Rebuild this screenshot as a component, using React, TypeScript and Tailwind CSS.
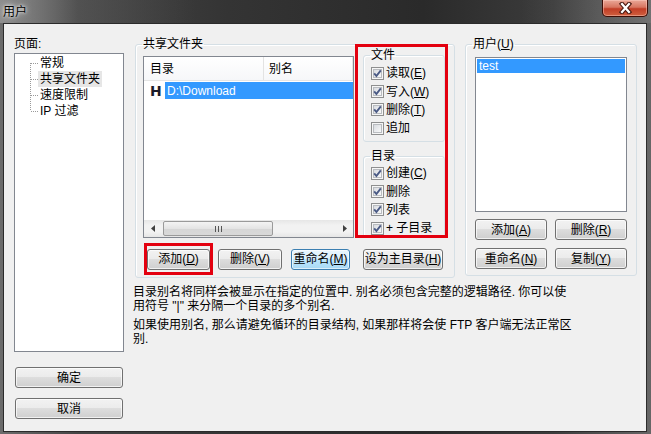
import type { ReactNode } from "react";

const btnBase =
  "h-[21px] flex items-center justify-center rounded-[3px] border text-[12px] leading-none text-black";
const btnNormal =
  "border-[#707070] bg-[linear-gradient(#f2f2f2_0%,#ebebeb_49%,#dddddd_50%,#cfcfcf_100%)] shadow-[inset_0_0_0_1px_rgba(255,255,255,0.7)]";
const btnFocus =
  "border-[#3c7fb1] bg-[linear-gradient(#eaf6fd_0%,#d9f0fc_49%,#bee6fd_50%,#a7d9f5_100%)] shadow-[inset_0_0_0_1px_rgba(255,255,255,0.6)]";

const groupBox = "border border-[#d5dfe5] rounded-[3px] shadow-[inset_1px_1px_0_#fff]";

const Btn = ({ children, className, focused }: { children: ReactNode; className: string; focused?: boolean }) => (
  <div className={`${btnBase} ${focused ? btnFocus : btnNormal} ${className}`}>{children}</div>
);

// accelerator key, e.g. (E) with underline
const K = ({ c }: { c: string }) => (
  <>
    (<span className="underline underline-offset-1">{c}</span>)
  </>
);

const Check = ({ on }: { on: boolean }) => (
  <svg width="13" height="13" viewBox="0 0 13 13" className="shrink-0">
    <defs>
      <linearGradient id="cbg" x1="0" y1="0" x2="1" y2="1">
        <stop offset="0" stopColor="#d6d9de" />
        <stop offset="1" stopColor="#fbfbfb" />
      </linearGradient>
    </defs>
    <rect x="0.5" y="0.5" width="12" height="12" fill="#f6f6f6" stroke="#8e8f8f" />
    <rect x="2.5" y="2.5" width="8" height="8" fill="url(#cbg)" stroke="#b9bcc0" />
    {on && <path d="M3.2 6.4 L5.4 9 L9.8 3.4" fill="none" stroke="#4a5a85" strokeWidth="1.9" />}
  </svg>
);

const Row = ({ on, children }: { on: boolean; children: ReactNode }) => (
  <div className="flex items-center h-[18.4px] gap-[2px]">
    <Check on={on} />
    <span>{children}</span>
  </div>
);

// dotted tree connector; pos: first | mid | last
const TreeLine = ({ pos }: { pos: "first" | "mid" | "last" }) => (
  <svg width="8" height="16" viewBox="0 0 8 16" className="shrink-0" shapeRendering="crispEdges">
    <line
      x1="0.5"
      y1={pos === "first" ? 8 : 0}
      x2="0.5"
      y2={pos === "last" ? 8 : 16}
      stroke="#9a9a9a"
      strokeDasharray="1 1"
    />
    <line x1="1" y1="8.5" x2="8" y2="8.5" stroke="#9a9a9a" strokeDasharray="1 1" />
  </svg>
);

const treeItems: { label: string; pos: "first" | "mid" | "last"; sel?: boolean }[] = [
  { label: "常规", pos: "first" },
  { label: "共享文件夹", pos: "mid", sel: true },
  { label: "速度限制", pos: "mid" },
  { label: "IP 过滤", pos: "last" },
];

export default function App() {
  return (
    <div className="w-[651px] h-[434px] flex flex-col overflow-hidden bg-[linear-gradient(90deg,#6c6c6c_0%,#444_12%,#343434_35%,#2a2a2a_65%,#3c3c3c_85%,#666_100%)] font-['Liberation_Sans','Noto_Sans_CJK_SC',sans-serif] text-[12px] leading-[14px] text-black">
      {/* title bar */}
      <div className="h-[23px] shrink-0 flex justify-between items-start bg-[linear-gradient(90deg,rgba(170,170,170,0.55)_0%,rgba(120,120,120,0.25)_12%,transparent_30%,transparent_80%,rgba(140,140,140,0.3)_100%)]">
        <div className="pl-[3px] pt-[5px] [text-shadow:0_0_6px_#fff,0_0_3px_#fff]">用户</div>
        <div className="mr-[3px] w-[46px] h-[17px] rounded-b-[5px] border border-t-0 border-[#3d0d05] bg-[linear-gradient(#eaa898_0%,#d77560_45%,#c13d26_55%,#d0603f_100%)] shadow-[inset_0_0_0_1px_rgba(255,210,200,0.45)] flex items-center justify-center">
          <svg width="15" height="12" viewBox="0 0 15 12">
            <path d="M4 2 L11 10 M11 2 L4 10" stroke="#4a1a12" strokeWidth="4.4" strokeLinecap="square" />
            <path d="M4 2 L11 10 M11 2 L4 10" stroke="#ffffff" strokeWidth="2.2" strokeLinecap="square" />
          </svg>
        </div>
      </div>

      {/* client area */}
      <div className="flex-1 ml-[3px] mr-[4px] mb-[2px] border border-[#2b2b2b] bg-[#f0f0f0] flex">
        {/* left column */}
        <div className="w-[120px] shrink-0 pl-[10px] pt-[13px] flex flex-col">
          <div>页面:</div>
          <div className="mt-[2px] w-[110px] h-[299px] border border-[#828790] bg-white pt-[1px]">
            {treeItems.map((t) => (
              <div key={t.label} className="h-[16px] flex items-center pl-[15px]">
                <TreeLine pos={t.pos} />
                <span className={`px-[2px] h-[16px] flex items-center ${t.sel ? "bg-[#e6e6e6]" : ""}`}>
                  {t.label}
                </span>
              </div>
            ))}
          </div>
          <Btn className="mt-[15px] ml-[1px] w-[108px]">确定</Btn>
          <Btn className="mt-[10px] ml-[1px] w-[108px]">取消</Btn>
        </div>

        {/* right area */}
        <div className="ml-[9px] pt-[13px] flex flex-col">
          <div className="flex items-start">
            {/* shared folders */}
            <fieldset className={`${groupBox} ml-[2px] w-[320px]`}>
              <legend className="ml-[6px] px-[1px] leading-[14px]">共享文件夹</legend>
              <div className="flex flex-col pb-[2px]">
                <div className="flex items-start">
                  <div className="ml-[7px] mt-[5px] w-[211px] h-[182px] border border-[#828790] bg-white flex flex-col">
                    <div className="h-[24px] flex border-b border-[#e5e5e5] bg-[linear-gradient(#ffffff,#f6f7f9)]">
                      <div className="w-[120px] pl-[6px] flex items-center border-r border-[#e3e3e3]">目录</div>
                      <div className="flex-1 pl-[5px] flex items-center border-r border-[#e3e3e3]">别名</div>
                    </div>
                    <div className="h-[17px] mt-[1px] flex items-center">
                      <span className="ml-[6px] w-[15px] font-['DejaVu_Sans',sans-serif] font-bold text-[14px] text-[#1a1a2a]">
                        H
                      </span>
                      <div className="flex-1 h-[17px] bg-[#3399ff] text-white pl-[2px] flex items-center">
                        {"D:\\Download"}
                      </div>
                    </div>
                    <div className="flex-1" />
                    {/* horizontal scrollbar */}
                    <div className="h-[17px] flex items-center bg-[linear-gradient(#e6e6e6,#f2f2f2_30%,#f2f2f2_70%,#e6e6e6)]">
                      <div className="w-[17px] h-[17px] flex items-center justify-center">
                        <svg width="4" height="7" viewBox="0 0 4 7">
                          <path d="M4 0 L0 3.5 L4 7 Z" fill="#404040" />
                        </svg>
                      </div>
                      <div className="ml-[2px] w-[110px] h-[15px] rounded-[2px] border border-[#9a9a9a] bg-[linear-gradient(#f4f4f4,#e4e4e4_50%,#d6d6d6_51%,#d9d9d9)] flex items-center justify-center">
                        <svg width="7" height="6" viewBox="0 0 7 6" shapeRendering="crispEdges">
                          <path d="M0.5 0 V6 M3.5 0 V6 M6.5 0 V6" stroke="#555" />
                        </svg>
                      </div>
                      <div className="flex-1" />
                      <div className="w-[17px] h-[17px] flex items-center justify-center">
                        <svg width="4" height="7" viewBox="0 0 4 7">
                          <path d="M0 0 L4 3.5 L0 7 Z" fill="#404040" />
                        </svg>
                      </div>
                    </div>
                  </div>

                  {/* permissions, red marked */}
                  <div className="ml-[1px] -mt-[7px] w-[93px] h-[194px] border-[3px] border-[#e3000f] overflow-hidden flex flex-col">
                    <fieldset className={`${groupBox} ml-[5px] mt-[1px] w-[82px] h-[94px] shrink-0`}>
                      <legend className="ml-[6px] px-[1px] leading-[14px]">文件</legend>
                      <div className="pl-[7px] pt-[2px]">
                        <Row on>
                          读取<K c="E" />
                        </Row>
                        <Row on>
                          写入<K c="W" />
                        </Row>
                        <Row on>
                          删除<K c="T" />
                        </Row>
                        <Row on={false}>追加</Row>
                      </div>
                    </fieldset>
                    <fieldset className={`${groupBox} ml-[5px] mt-[7px] w-[82px] h-[94px] shrink-0`}>
                      <legend className="ml-[6px] px-[1px] leading-[14px]">目录</legend>
                      <div className="pl-[7px] pt-[1px]">
                        <Row on>
                          创建<K c="C" />
                        </Row>
                        <Row on>删除</Row>
                        <Row on>列表</Row>
                        <Row on>+ 子目录</Row>
                      </div>
                    </fieldset>
                  </div>
                </div>

                <div className="mt-[5px] h-[32px] flex items-center">
                  <div className="ml-[8px] w-[69px] h-[32px] border-[3px] border-[#e3000f] flex items-center">
                    <Btn className="w-[63px]">
                      添加<K c="D" />
                    </Btn>
                  </div>
                  <Btn className="ml-[5px] w-[64px]">
                    删除<K c="V" />
                  </Btn>
                  <Btn focused className="ml-[9px] w-[59px]">
                    重命名<K c="M" />
                  </Btn>
                  <Btn className="ml-[13px] w-[80px]">
                    设为主目录<K c="H" />
                  </Btn>
                </div>
              </div>
            </fieldset>

            {/* users */}
            <fieldset className={`${groupBox} ml-[10px] w-[172px]`}>
              <legend className="ml-[6px] px-[1px] leading-[14px]">
                用户<K c="U" />
              </legend>
              <div className="flex flex-col pb-[6px]">
                <div className="ml-[9px] mt-[6px] w-[152px] h-[155px] border border-[#828790] bg-white p-[1px]">
                  <div className="h-[14px] bg-[#3399ff] text-white pl-[2px] leading-[14px]">test</div>
                </div>
                <div className="ml-[9px] mt-[7px] flex gap-[8px]">
                  <Btn className="w-[72px]">
                    添加<K c="A" />
                  </Btn>
                  <Btn className="w-[72px]">
                    删除<K c="R" />
                  </Btn>
                </div>
                <div className="ml-[9px] mt-[8px] flex gap-[8px]">
                  <Btn className="w-[72px]">
                    重命名<K c="N" />
                  </Btn>
                  <Btn className="w-[72px]">
                    复制<K c="Y" />
                  </Btn>
                </div>
              </div>
            </fieldset>
          </div>

          <div className="mt-[7px] whitespace-nowrap">
            <p>
              目录别名将同样会被显示在指定的位置中. 别名必须包含完整的逻辑路径. 你可以使
              <br />
              用符号 "|" 来分隔一个目录的多个别名.
            </p>
            <p className="mt-[5px]">
              如果使用别名, 那么请避免循环的目录结构, 如果那样将会使 FTP 客户端无法正常区
              <br />
              别.
            </p>
          </div>
        </div>
      </div>
    </div>
  );
}
